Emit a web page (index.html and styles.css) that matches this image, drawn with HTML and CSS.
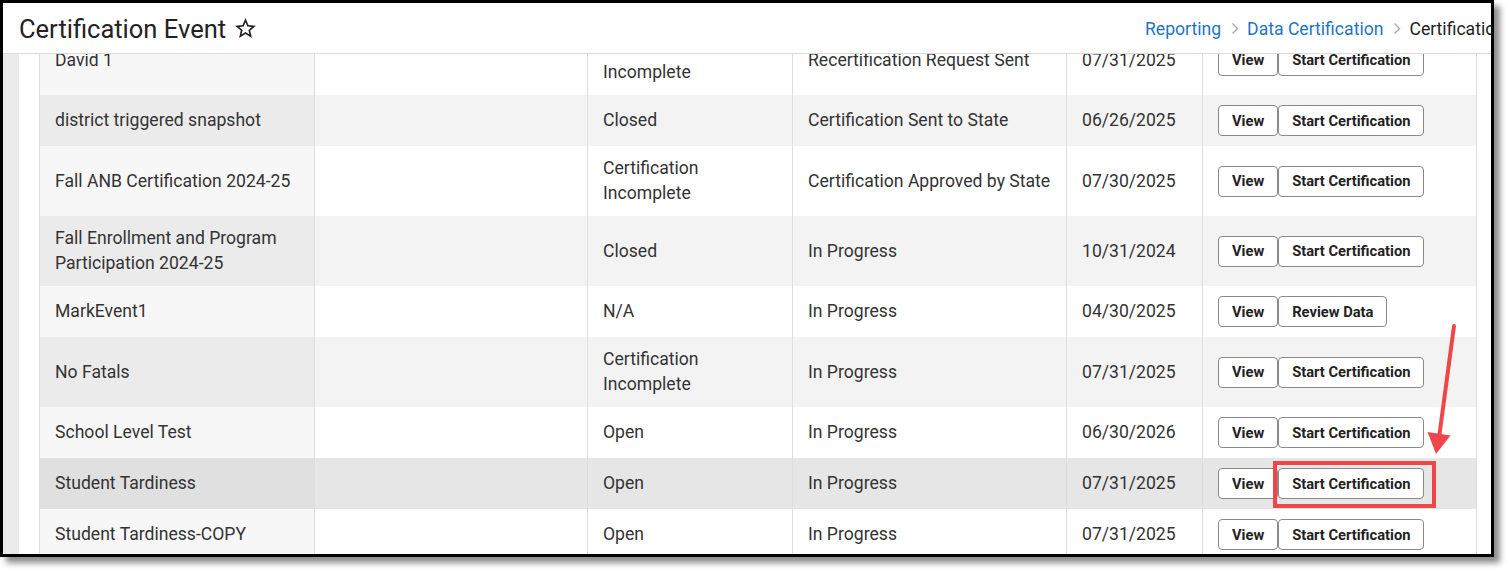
FILE: index.html
```html
<!DOCTYPE html>
<html lang="en">
<head>
<meta charset="utf-8">
<title>Certification Event</title>
<link rel="stylesheet" href="styles.css">
</head>
<body>
<div class="shot">
  <header class="topbar">
    <h1 class="title">Certification Event</h1>
    <svg class="star" viewBox="0 0 24 24" aria-hidden="true"><path d="M22 9.24l-7.190-.62L12 2 9.19 8.63 2 9.24l5.46 4.73L5.82 21 12 17.27 18.18 21l-1.63-7.03L22 9.24zM12 15.4l-3.76 2.27 1-4.28-3.32-2.880 4.38-.38L12 6.1l1.71 4.04 4.38.38-3.32 2.88 1 4.28L12 15.4z"/></svg>
    <nav class="crumbs">
      <a class="crumb-link" href="#">Reporting</a>
      <svg class="chev" viewBox="0 0 8 13" aria-hidden="true"><path d="M1.5 1.5L6.5 6.5L1.5 11.5"/></svg>
      <a class="crumb-link" href="#">Data Certification</a>
      <svg class="chev" viewBox="0 0 8 13" aria-hidden="true"><path d="M1.5 1.5L6.5 6.5L1.5 11.5"/></svg>
      <span class="crumb-current">Certification Event</span>
    </nav>
  </header>
  <main class="content">
    <div class="side-strip"></div>
    <div class="page">
      <table class="grid">
        <colgroup>
          <col class="c-name"><col class="c-desc"><col class="c-status"><col class="c-stage"><col class="c-date"><col class="c-act">
        </colgroup>
        <tbody>
          <tr>
            <td>David 1</td><td></td><td>Certification<br>Incomplete</td><td>Recertification Request Sent</td><td>07/31/2025</td>
            <td><div class="actions"><button class="btn">View</button><button class="btn">Start Certification</button></div></td>
          </tr>
          <tr class="alt">
            <td>district triggered snapshot</td><td></td><td>Closed</td><td>Certification Sent to State</td><td>06/26/2025</td>
            <td><div class="actions"><button class="btn">View</button><button class="btn">Start Certification</button></div></td>
          </tr>
          <tr>
            <td>Fall ANB Certification 2024-25</td><td></td><td>Certification<br>Incomplete</td><td>Certification Approved by State</td><td>07/30/2025</td>
            <td><div class="actions"><button class="btn">View</button><button class="btn">Start Certification</button></div></td>
          </tr>
          <tr class="alt">
            <td>Fall Enrollment and Program<br>Participation 2024-25</td><td></td><td>Closed</td><td>In Progress</td><td>10/31/2024</td>
            <td><div class="actions"><button class="btn">View</button><button class="btn">Start Certification</button></div></td>
          </tr>
          <tr>
            <td>MarkEvent1</td><td></td><td>N/A</td><td>In Progress</td><td>04/30/2025</td>
            <td><div class="actions"><button class="btn">View</button><button class="btn">Review Data</button></div></td>
          </tr>
          <tr class="alt">
            <td>No Fatals</td><td></td><td>Certification<br>Incomplete</td><td>In Progress</td><td>07/31/2025</td>
            <td><div class="actions"><button class="btn">View</button><button class="btn">Start Certification</button></div></td>
          </tr>
          <tr>
            <td>School Level Test</td><td></td><td>Open</td><td>In Progress</td><td>06/30/2026</td>
            <td><div class="actions"><button class="btn">View</button><button class="btn">Start Certification</button></div></td>
          </tr>
          <tr class="hover">
            <td>Student Tardiness</td><td></td><td>Open</td><td>In Progress</td><td>07/31/2025</td>
            <td><div class="actions"><button class="btn">View</button><button class="btn">Start Certification</button></div></td>
          </tr>
          <tr>
            <td>Student Tardiness-COPY</td><td></td><td>Open</td><td>In Progress</td><td>07/31/2025</td>
            <td><div class="actions"><button class="btn">View</button><button class="btn">Start Certification</button></div></td>
          </tr>
        </tbody>
      </table>
    </div>
  </main>
</div>
<svg class="annot" viewBox="0 0 1509 573" aria-hidden="true">
  <rect class="annot-box" x="1275" y="463" width="159" height="43"/>
  <line class="annot-line" x1="1454" y1="326" x2="1439" y2="438"/>
  <polygon class="annot-head" points="1427.5,432 1450.5,435.5 1436,454"/>
</svg>
</body>
</html>
```

FILE: styles.css
```css
html, body {
  margin: 0;
  padding: 0;
}

body {
  position: relative;
  width: 1509px;
  height: 573px;
  overflow: hidden;
  background: #ffffff;
  font-family: Roboto, "Liberation Sans", Arial, sans-serif;
  color: #222222;
}

.shot {
  width: 1494px;
  height: 557px;
  box-sizing: border-box;
  border: 3px solid #000000;
  box-shadow: 6px 6px 6px rgba(0, 0, 0, 0.45);
  background: #ffffff;
  display: flex;
  flex-direction: column;
  overflow: hidden;
}

.topbar {
  flex-shrink: 0;
  box-sizing: border-box;
  height: 51px;
  padding-top: 1px;
  padding-left: 16px;
  border-bottom: 1px solid #dcdcdc;
  display: flex;
  align-items: center;
  background: #ffffff;
}

.title {
  margin: 0;
  font-size: 25.5px;
  font-weight: 400;
  color: #222222;
  white-space: nowrap;
}

.star {
  width: 25px;
  height: 25px;
  margin-left: 7px;
  fill: #222222;
  flex-shrink: 0;
}

.crumbs {
  margin-left: auto;
  width: 346px;
  flex-shrink: 0;
  display: flex;
  align-items: center;
  overflow: hidden;
  white-space: nowrap;
  font-size: 17.6px;
}

.crumbs > * {
  flex-shrink: 0;
}

.crumb-link {
  color: #1f74c4;
  text-decoration: none;
}

.crumb-current {
  color: #222222;
}

.chev {
  width: 8px;
  height: 13px;
  margin: 0 8px 0 10px;
  fill: none;
  stroke: #a8a8a8;
  stroke-width: 1.4;
}

.content {
  flex: 1;
  min-height: 0;
  display: flex;
  overflow: hidden;
}

.side-strip {
  width: 16px;
  flex-shrink: 0;
  background: #ebebeb;
}

.page {
  flex: 1;
  min-width: 0;
  padding-left: 20px;
  overflow: hidden;
}

.grid {
  margin-top: -29px;
  width: 1437px;
  table-layout: fixed;
  border-collapse: collapse;
  border-left: 1px solid #dedede;
  border-right: 1px solid #dedede;
}

.c-name { width: 275px; }
.c-desc { width: 273px; }
.c-status { width: 205px; }
.c-stage { width: 274px; }
.c-date { width: 136px; }
.c-act { width: 274px; }

.grid td {
  padding: 10px 15px;
  border-left: 1px solid #dedede;
  font-size: 17.6px;
  line-height: 25px;
  color: #333333;
  vertical-align: middle;
  background: #ffffff;
  white-space: nowrap;
}

.grid td:first-child {
  background: #f7f7f7;
}

.grid tr.alt td {
  background: #f3f3f3;
}

.grid tr.alt td:first-child {
  background: #ebebeb;
}

.grid tr.hover td {
  background: #e6e6e6;
}

.grid tr.hover td:first-child {
  background: #e0e0e0;
}

.actions {
  display: flex;
}

.btn {
  height: 31px;
  box-sizing: border-box;
  padding: 0 13px;
  border: 1px solid #8a8a8a;
  border-radius: 4px;
  background: #ffffff;
  font-family: Roboto, "Liberation Sans", Arial, sans-serif;
  font-size: 14.7px;
  font-weight: 700;
  color: #222222;
  white-space: nowrap;
}

.annot {
  position: absolute;
  left: 0;
  top: 0;
  width: 1509px;
  height: 573px;
  pointer-events: none;
}

.annot-box {
  fill: none;
  stroke: #f0464a;
  stroke-width: 4;
}

.annot-line {
  stroke: #f0464a;
  stroke-width: 4;
  stroke-linecap: round;
}

.annot-head {
  fill: #f0464a;
}
```
